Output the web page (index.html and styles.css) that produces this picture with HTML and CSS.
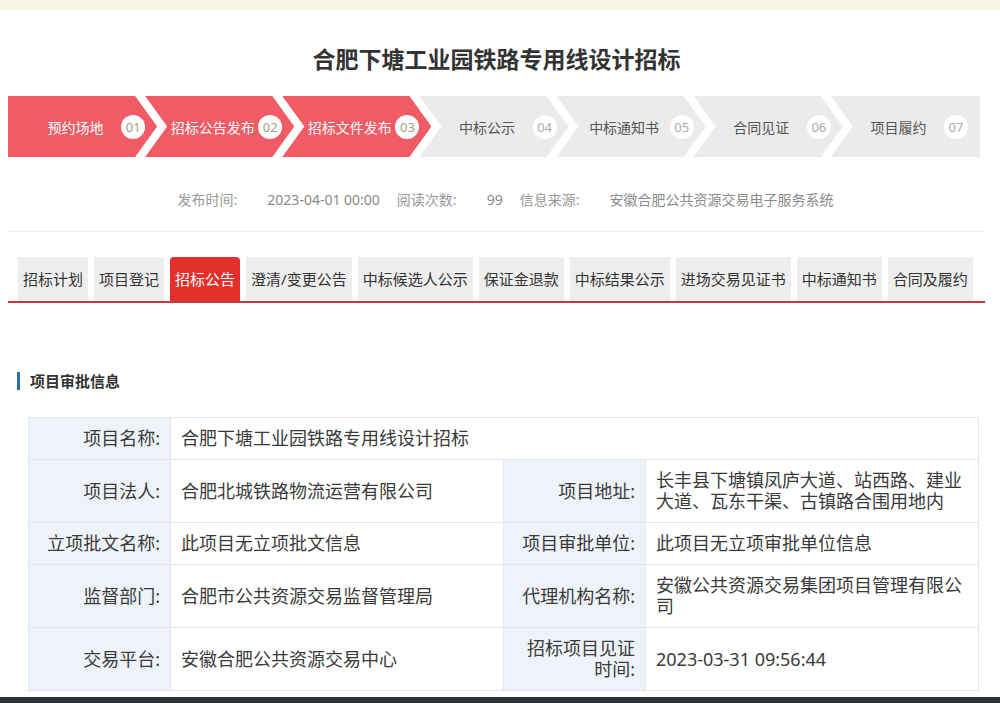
FILE: index.html
```html
<!DOCTYPE html>
<html lang="zh-CN">
<head>
  <meta charset="UTF-8" />
  <meta name="viewport" content="width=device-width, initial-scale=1" />
  <title>合肥下塘工业园铁路专用线设计招标</title>
  <link rel="stylesheet" href="styles.css">
</head>
<body>

<div class="top-strip"></div>

<div class="page">
  <h1 class="title">合肥下塘工业园铁路专用线设计招标</h1>

  <div class="steps">
    <div class="step done first"><span class="step-name">预约场地</span><span class="step-num">01</span></div>
    <div class="step done"><span class="step-name">招标公告发布</span><span class="step-num">02</span></div>
    <div class="step done"><span class="step-name">招标文件发布</span><span class="step-num">03</span></div>
    <div class="step"><span class="step-name">中标公示</span><span class="step-num">04</span></div>
    <div class="step"><span class="step-name">中标通知书</span><span class="step-num">05</span></div>
    <div class="step"><span class="step-name">合同见证</span><span class="step-num">06</span></div>
    <div class="step last"><span class="step-name">项目履约</span><span class="step-num">07</span></div>
  </div>

  <div class="meta">
    <span class="meta-label">发布时间:</span>
    <span class="meta-value">2023-04-01 00:00</span>
    <span class="meta-label">阅读次数:</span>
    <span class="meta-value">99</span>
    <span class="meta-label">信息来源:</span>
    <span class="meta-value">安徽合肥公共资源交易电子服务系统</span>
  </div>

  <div class="divider"></div>

  <div class="tabs">
    <a class="tab">招标计划</a>
    <a class="tab">项目登记</a>
    <a class="tab active">招标公告</a>
    <a class="tab">澄清/变更公告</a>
    <a class="tab">中标候选人公示</a>
    <a class="tab">保证金退款</a>
    <a class="tab">中标结果公示</a>
    <a class="tab">进场交易见证书</a>
    <a class="tab">中标通知书</a>
    <a class="tab">合同及履约</a>
  </div>

  <h3 class="section-title">项目审批信息</h3>

  <table class="info-table">
    <colgroup>
      <col class="col-label">
      <col class="col-value">
      <col class="col-label">
      <col class="col-value">
    </colgroup>
    <tbody>
      <tr>
        <th>项目名称:</th>
        <td colspan="3">合肥下塘工业园铁路专用线设计招标</td>
      </tr>
      <tr>
        <th>项目法人:</th>
        <td>合肥北城铁路物流运营有限公司</td>
        <th>项目地址:</th>
        <td>长丰县下塘镇凤庐大道、站西路、建业大道、瓦东干渠、古镇路合围用地内</td>
      </tr>
      <tr>
        <th>立项批文名称:</th>
        <td>此项目无立项批文信息</td>
        <th>项目审批单位:</th>
        <td>此项目无立项审批单位信息</td>
      </tr>
      <tr>
        <th>监督部门:</th>
        <td>合肥市公共资源交易监督管理局</td>
        <th>代理机构名称:</th>
        <td>安徽公共资源交易集团项目管理有限公司</td>
      </tr>
      <tr>
        <th>交易平台:</th>
        <td>安徽合肥公共资源交易中心</td>
        <th>招标项目见证时间:</th>
        <td>2023-03-31 09:56:44</td>
      </tr>
    </tbody>
  </table>
</div>

<div class="bottom-bar"></div>

</body>
</html>
```

FILE: styles.css
```css
body {
  margin: 0;
  font-family: "Noto Sans", "Noto Sans CJK SC", sans-serif;
  background-color: #fff;
  color: #333;
  overflow: hidden;
}

.top-strip {
  height: 10px;
  background-color: #f5f2e6;
}

.page {
  margin: 0 15px 0 8px;
}

.title {
  margin: 25px 0 0;
  font-size: 23px;
  line-height: 48px;
  font-weight: bold;
  text-align: center;
  color: #333;
}

/* progress chevrons */
.steps {
  display: flex;
  height: 61px;
  margin: 13px 5px 0 0;
}

.step {
  flex: 1;
  display: flex;
  align-items: center;
  margin-left: -12px;
  padding: 0 12px 0 22px;
  background-color: #ebebeb;
  color: #555;
  font-size: 14px;
  clip-path: polygon(0 0, calc(100% - 22px) 0, 100% 50%, calc(100% - 22px) 100%, 0 100%, 22px 50%);
}

.step.first {
  margin-left: 0;
  clip-path: polygon(0 0, calc(100% - 22px) 0, 100% 50%, calc(100% - 22px) 100%, 0 100%);
}

.step.last {
  clip-path: polygon(0 0, 100% 0, 100% 100%, 0 100%, 22px 50%);
}

.step.done {
  background-color: #f15b66;
  color: #fff;
}

.step-name {
  flex: 1;
  text-align: center;
  white-space: nowrap;
}

.step-num {
  width: 24px;
  height: 24px;
  border-radius: 50%;
  background-color: #fff;
  color: #aaa;
  font-size: 13px;
  line-height: 24px;
  text-align: center;
  flex-shrink: 0;
}

.step.done .step-num {
  color: #a59c84;
}

.meta {
  display: flex;
  justify-content: center;
  margin-top: 33px;
  padding-left: 18px;
  line-height: 20px;
  font-size: 14px;
  color: #999;
}

.meta-label {
  margin-left: 17px;
}

.meta-label:first-child {
  margin-left: 0;
}

.meta-value {
  margin-left: 30px;
  color: #8a8a8a;
}

.divider {
  margin-top: 21px;
  border-top: 1px solid #eee;
}

/* tabs */
.tabs {
  display: flex;
  gap: 6px;
  margin-top: 25px;
  padding-left: 10px;
  border-bottom: 2px solid #c8393b;
}

.tab {
  height: 44px;
  line-height: 44px;
  padding: 0 5px;
  background-color: #eee;
  color: #333;
  font-size: 15px;
  white-space: nowrap;
}

.tab.active {
  background-color: #e4302b;
  color: #fff;
  border-radius: 4px 4px 0 0;
}

.section-title {
  margin: 69px 0 0 9px;
  padding-left: 10px;
  border-left: 3px solid #2c6fa5;
  font-size: 15px;
  line-height: 18px;
  font-weight: bold;
}

/* info table */
.info-table {
  width: 950px;
  margin: 27px 0 0 20px;
  border-collapse: collapse;
  table-layout: fixed;
  font-size: 18px;
  line-height: 21px;
  border: 1px solid #e2e7ed;
}

.col-label {
  width: 142px;
}

.col-value {
  width: 333px;
}

.info-table th,
.info-table td {
  padding: 10px;
  border: 1px solid #e2e7ed;
  vertical-align: middle;
}

.info-table th {
  font-weight: normal;
  text-align: right;
  background-color: #eef3f9;
  color: #3a3a3a;
}

.info-table td {
  text-align: left;
  color: #3a3a3a;
}

.bottom-bar {
  margin-top: 6px;
  height: 12px;
  background-color: #2d3539;
}
```
